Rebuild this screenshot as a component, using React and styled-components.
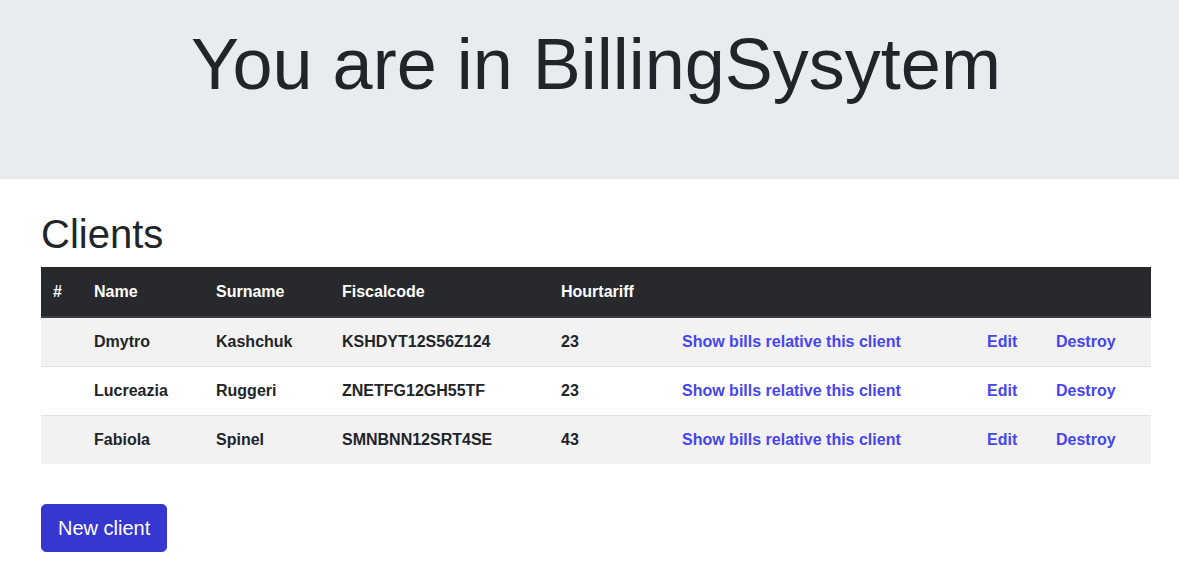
import React from "react";
import styled, { createGlobalStyle } from "styled-components";

const GlobalStyle = createGlobalStyle`
  * { box-sizing: border-box; }
  body {
    margin: 0;
    font-family: "Liberation Sans", Arial, sans-serif;
    font-size: 16px;
    line-height: 1.5;
    color: #212529;
    background: #ffffff;
  }
`;

const clients = [
  { name: "Dmytro", surname: "Kashchuk", fiscal: "KSHDYT12S56Z124", tariff: 23 },
  { name: "Lucreazia", surname: "Ruggeri", fiscal: "ZNETFG12GH55TF", tariff: 23 },
  { name: "Fabiola", surname: "Spinel", fiscal: "SMNBNN12SRT4SE", tariff: 43 },
];

const widths = [41, 122, 126, 219, 121, 305, 69, 107];

const App = () => {
  return (
    <>
      <GlobalStyle />
      <Jumbotron>
        <Title>You are in BillingSysytem</Title>
      </Jumbotron>
      <Container>
        <Heading>Clients</Heading>
        <Table>
          <colgroup>
            {widths.map((w, i) => (
              <Col key={i} $w={w} />
            ))}
          </colgroup>
          <thead>
            <tr>
              <Th>#</Th>
              <Th>Name</Th>
              <Th>Surname</Th>
              <Th>Fiscalcode</Th>
              <Th>Hourtariff</Th>
              <Th />
              <Th />
              <Th />
            </tr>
          </thead>
          <tbody>
            {clients.map((c, i) => (
              <Row key={c.fiscal} $striped={i % 2 === 0}>
                <Td />
                <Td>{c.name}</Td>
                <Td>{c.surname}</Td>
                <Td>{c.fiscal}</Td>
                <Td>{c.tariff}</Td>
                <Td><Link href="#">Show bills relative this client</Link></Td>
                <Td><Link href="#">Edit</Link></Td>
                <Td><Link href="#">Destroy</Link></Td>
              </Row>
            ))}
          </tbody>
        </Table>
        <Button>New client</Button>
      </Container>
    </>
  );
};
export default App;

const Jumbotron = styled.div`
  height: 179px;
  background: #e9ecef;
  padding: 21px 0 0 41px;
`;

const Title = styled.h1`
  margin: 0;
  width: 1110px;
  text-align: center;
  font-size: 72px;
  font-weight: 300;
  line-height: 1.2;
  color: #212529;
`;

const Container = styled.div`
  width: 1110px;
  margin-left: 41px;
  padding-top: 31px;
`;

const Heading = styled.h2`
  margin: 0 0 9px;
  font-size: 40px;
  font-weight: 500;
  line-height: 1.2;
`;

const Table = styled.table`
  width: 1110px;
  table-layout: fixed;
  border-collapse: collapse;
  font-weight: 700;
  margin-bottom: 40px;
`;

const Col = styled.col`
  width: ${(p) => p.$w}px;
`;

const Th = styled.th`
  background: #27292d;
  color: #ffffff;
  text-align: left;
  padding: 12px;
  line-height: 24px;
  border-top: 1px solid #27292d;
  border-bottom: 2px solid #3a3e43;
  white-space: nowrap;
`;

const Row = styled.tr`
  background: ${(p) => (p.$striped ? "#f2f2f2" : "#ffffff")};
`;

const Td = styled.td`
  padding: 12px;
  line-height: 24px;
  border-top: 1px solid #dee2e6;
  white-space: nowrap;
`;

const Link = styled.a`
  color: #4646f0;
  text-decoration: none;
`;

const Button = styled.button`
  display: inline-block;
  font-family: "Liberation Sans", Arial, sans-serif;
  font-size: 20px;
  line-height: 30px;
  padding: 8px 16px;
  color: #ffffff;
  background: #3637cf;
  border: 1px solid #3637cf;
  border-radius: 5px;
  cursor: pointer;
`;
